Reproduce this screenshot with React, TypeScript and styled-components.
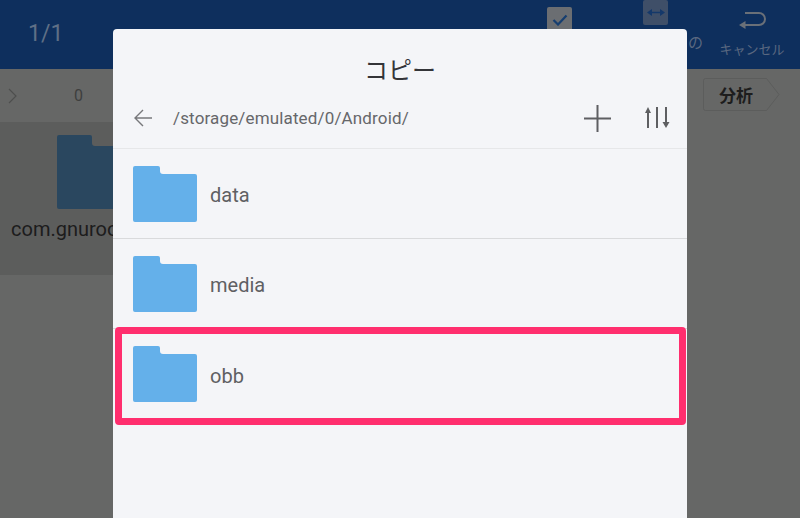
import React from 'react'
import styled, { createGlobalStyle } from 'styled-components'

const GlobalStyle = createGlobalStyle`
	html, body {
		margin: 0;
		padding: 0;
		background: #666766;
		overflow: hidden;
	}
	body {
		font-family: Roboto, "Noto Sans CJK JP", sans-serif;
	}
`
const Screen = styled.div`
	position: relative;
	width: 800px;
	height: 518px;
	overflow: hidden;
	background: #666766;
`
const Header = styled.header`
	display: flex;
	align-items: flex-start;
	height: 69px;
	background: #0e2f5d;
`
const Counter = styled.div`
	margin: 18px 0 0 28px;
	font-size: 23px;
	line-height: 32px;
	color: #5f6f86;
`
const Actions = styled.div`
	display: flex;
	margin-left: auto;
`
const Action = styled.div<{ $top: number }>`
	display: flex;
	flex-direction: column;
	align-items: center;
	width: 96px;
	padding-top: ${(p) => p.$top}px;
`
const ActionBox = styled.div<{ $bg: string }>`
	display: flex;
	align-items: center;
	justify-content: center;
	width: 25px;
	height: 25px;
	margin-right: 1px;
	border-radius: 2px;
	background: ${(p) => p.$bg};
`
const ActionLabel = styled.span<{ $gap: number; $size: number; $nudge?: number }>`
	margin-top: ${(p) => p.$gap}px;
	margin-left: ${(p) => p.$nudge || 0}px;
	font-size: ${(p) => p.$size}px;
	line-height: 16px;
	color: #5a6880;
	white-space: nowrap;
`
const PathBar = styled.div`
	display: flex;
	align-items: center;
	height: 53px;
	padding: 0 28px 0 8px;
`
const Count = styled.span`
	margin-left: 56px;
	font-size: 16px;
	color: #3e3f3e;
`
const AnalyzeTag = styled.div`
	display: flex;
	align-items: center;
	position: relative;
	margin-left: auto;
	margin-bottom: 2px;
	box-sizing: border-box;
	width: 69px;
	height: 33px;
	padding-left: 16px;
	font-size: 17px;
	font-weight: 700;
	color: #1d1d1d;
`
const TagOutline = styled.svg`
	position: absolute;
	top: 0;
	left: 0;
`
const TagText = styled.span`
	position: relative;
`
const FileCell = styled.div`
	display: flex;
	flex-direction: column;
	width: 200px;
	height: 153px;
	padding: 13px 0 0 11px;
	box-sizing: border-box;
	background: #5c5d5c;
`
const CellFolder = styled.div`
	height: 75px;
	margin-left: 46px;
`
const CellName = styled.div`
	margin-top: 6px;
	font-size: 20px;
	line-height: 26px;
	color: #1c1c1c;
	white-space: nowrap;
`
const Dialog = styled.section`
	position: absolute;
	top: 29px;
	left: 113px;
	bottom: 0;
	width: 574px;
	border-radius: 4px 4px 0 0;
	background: #f4f5f8;
`
const Title = styled.h1`
	margin: 0;
	padding-top: 25px;
	font-size: 24px;
	font-weight: 400;
	line-height: 34px;
	text-align: center;
	color: #333438;
`
const Breadcrumb = styled.div`
	display: flex;
	align-items: center;
	box-sizing: border-box;
	height: 61px;
	padding: 0 17px 0 21px;
	border-bottom: 1px solid #e6e7e9;
`
const PathText = styled.span`
	margin-left: 21px;
	font-size: 17px;
	letter-spacing: 0.15px;
	color: #66676a;
`
const ToolIcons = styled.div`
	display: flex;
	align-items: center;
	gap: 33px;
	margin-left: auto;
`
const Row = styled.div`
	display: flex;
	align-items: center;
	gap: 13px;
	box-sizing: border-box;
	height: 90px;
	padding-left: 20px;
	border-bottom: 1px solid #d9dadc;
	&:last-child {
		border-bottom: 0;
	}
`
const RowName = styled.span`
	padding-top: 3px;
	font-size: 20px;
	color: #5f6063;
`
const Highlight = styled.div`
	position: absolute;
	top: 327px;
	left: 115px;
	width: 571px;
	height: 98px;
	box-sizing: border-box;
	border: 7px solid #ff2e6e;
	border-radius: 4px;
`

function FolderIcon({ color }: { color: string }) {
	return (
		<svg width="64" height="56" viewBox="0 0 64 56">
			<path
				d="M2 0H25a2 2 0 0 1 2 2V5a3 3 0 0 0 3 3H62a2 2 0 0 1 2 2V54a2 2 0 0 1-2 2H2a2 2 0 0 1-2-2V2a2 2 0 0 1 2-2Z"
				fill={color}
			/>
		</svg>
	)
}

const folders = ['data', 'media', 'obb']

export default function App() {
	return (
		<Screen>
			<GlobalStyle />
			<Header>
				<Counter>1/1</Counter>
				<Actions>
					<Action $top={7}>
						<ActionBox $bg="#6b6e72">
							<svg width="16" height="12" viewBox="0 0 16 12" fill="none">
								<path d="M1.500 6 6 10.500 14.500 1.500" stroke="#163e70" strokeWidth="2.2" />
							</svg>
						</ActionBox>
					</Action>
					<Action $top={0}>
						<ActionBox $bg="#3f4f68">
							<svg width="18" height="9" viewBox="0 0 18 9">
								<path d="M0 4.500 5 1V3.700H13V1L18 4.500 13 8V5.300H5V8Z" fill="#14386a" />
							</svg>
						</ActionBox>
						<ActionLabel $gap={10} $size={15} $nudge={4}>選択中のもの</ActionLabel>
					</Action>
					<Action $top={12}>
						<svg width="27" height="17" viewBox="0 0 27 17" fill="none">
							<path d="M6 1H20a6 6 0 0 1 0 12H6" stroke="#6a7078" strokeWidth="2" />
							<path d="M0 13 6.500 9V17Z" fill="#6a7078" />
						</svg>
						<ActionLabel $gap={13} $size={13}>キャンセル</ActionLabel>
					</Action>
				</Actions>
			</Header>
			<PathBar>
				<svg width="10" height="16" viewBox="0 0 10 16" fill="none">
					<path d="M1 1 8 8 1 15" stroke="#4e4f4e" strokeWidth="1.2" />
				</svg>
				<Count>0</Count>
				<AnalyzeTag>
					<TagOutline width="77" height="33" viewBox="0 0 77 33" fill="none">
						<path
							d="M2.500.5H63.500L76 16.500 63.500 32.500H2.500a2 2 0 0 1-2-2V2.500a2 2 0 0 1 2-2Z"
							stroke="#5c5d5c"
						/>
					</TagOutline>
					<TagText>分析</TagText>
				</AnalyzeTag>
			</PathBar>
			<FileCell>
				<CellFolder>
					<svg width="64" height="74" viewBox="0 0 64 74">
						<path
							d="M2 0H33a2 2 0 0 1 2 2V8a3 3 0 0 0 3 3H64V74H2a2 2 0 0 1-2-2V2a2 2 0 0 1 2-2Z"
							fill="#2a475f"
						/>
					</svg>
				</CellFolder>
				<CellName>com.gnuroot.debian</CellName>
			</FileCell>
			<Dialog>
				<Title>コピー</Title>
				<Breadcrumb>
					<svg width="18" height="18" viewBox="0 0 18 18" fill="none">
						<path d="M18 9H1.500M9 1 1 9 9 17" stroke="#77787b" strokeWidth="1.4" />
					</svg>
					<PathText>/storage/emulated/0/Android/</PathText>
					<ToolIcons>
						<svg width="27" height="27" viewBox="0 0 27 27" fill="none">
							<path d="M13.500 0V27M0 13.500H27" stroke="#5e5f62" strokeWidth="2" />
						</svg>
						<svg width="26" height="22" viewBox="0 0 26 22">
							<path
								d="M4 0 7 6H5V21H3V6H1ZM12 0H14V21H12ZM21 0H23V15H25.500L22 21 18.500 15H21Z"
								fill="#5e5f62"
							/>
						</svg>
					</ToolIcons>
				</Breadcrumb>
				{folders.map((name) => (
					<Row key={name}>
						<FolderIcon color="#64b0ea" />
						<RowName>{name}</RowName>
					</Row>
				))}
			</Dialog>
			<Highlight />
		</Screen>
	)
}
